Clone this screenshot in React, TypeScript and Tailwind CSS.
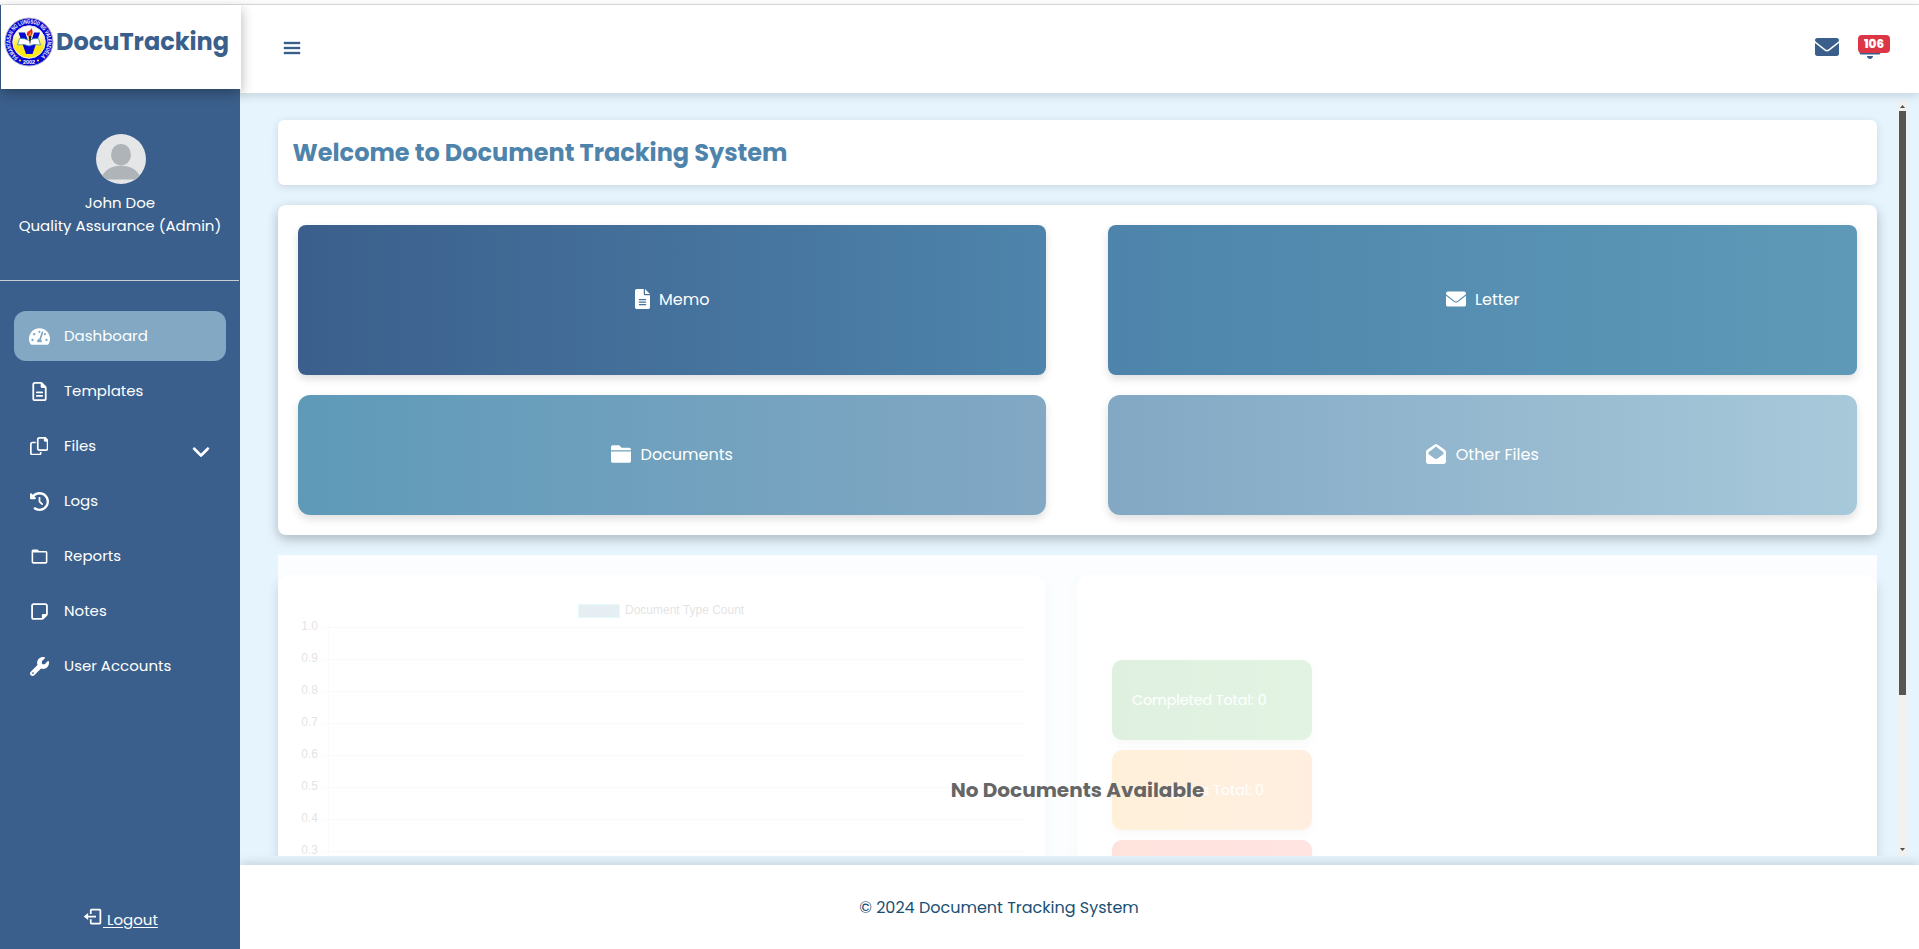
import type { ReactNode } from "react";
import { FaTachometerAlt } from "react-icons/fa";
import {
  FaBell,
  FaChevronDown,
  FaClockRotateLeft,
  FaRegFileLines,
  FaRegNoteSticky,
  FaWrench,
} from "react-icons/fa6";
import { BiFolder, BiLogOut, BiMenu } from "react-icons/bi";

const glyphs = {
  copy: {
    width: 512,
    d: "M502.6 70.63l-61.25-61.25C435.4 3.371 427.2 0 418.7 0H255.1c-35.35 0-64 28.66-64 64l.0195 256C192 355.4 220.7 384 256 384h192c35.2 0 64-28.8 64-64V93.25C512 84.77 508.6 76.63 502.6 70.63zM464 320c0 8.836-7.164 16-16 16H255.1c-8.838 0-16-7.164-16-16L239.1 64.13c0-8.836 7.164-16 16-16h128L384 96c0 17.67 14.33 32 32 32h47.1V320zM272 448c0 8.836-7.164 16-16 16H63.1c-8.838 0-16-7.164-16-16L47.98 192.1c0-8.836 7.164-16 16-16H160V128H63.99c-35.35 0-64 28.65-64 64l.0098 256C.002 483.3 28.66 512 64 512h192c35.2 0 64-28.8 64-64v-32h-47.1L272 448z",
  },
  envelope: {
    width: 512,
    d: "M256 352c-16.53 0-33.06-5.422-47.16-16.41L0 173.2V400C0 426.5 21.49 448 48 448h416c26.51 0 48-21.49 48-48V173.2l-208.8 162.5C289.1 346.6 272.5 352 256 352zM16.29 145.3l212.2 165.1c16.19 12.6 38.87 12.6 55.06 0l212.2-165.1C505.1 137.3 512 125 512 112C512 85.49 490.5 64 464 64h-416C21.49 64 0 85.49 0 112C0 125 6.01 137.3 16.29 145.3z",
  },
  envelopeOpen: {
    width: 512,
    d: "M493.6 163c-24.88-19.62-45.5-35.37-164.3-121.6C312.7 29.21 279.7 0 256.4 0H255.6C232.3 0 199.3 29.21 182.6 41.38C63.88 127.6 43.25 143.4 18.38 163C6.75 172 0 186 0 200.8v247.2C0 483.3 28.65 512 64 512h384c35.35 0 64-28.67 64-64.01V200.8C512 186 505.3 172 493.6 163zM303.2 367.5C289.1 378.5 272.5 384 256 384s-33.06-5.484-47.16-16.47L64 254.9V208.5c21.16-16.59 46.48-35.66 156.4-115.5c3.18-2.328 6.891-5.187 10.98-8.353C236.9 80.44 247.8 71.97 256 66.84c8.207 5.131 19.14 13.6 24.61 17.84c4.09 3.166 7.801 6.027 11.15 8.478C400.9 172.5 426.6 191.7 448 208.5v46.32L303.2 367.5z",
  },
  folder: {
    width: 512,
    d: "M464 96h-192l-64-64H48C21.5 32 0 53.5 0 80V160h512V144C512 117.5 490.5 96 464 96zM0 432C0 458.5 21.5 480 48 480h416c26.5 0 48-21.5 48-48V192H0V432z",
  },
  file: {
    width: 384,
    d: "M256 0v128h128L256 0zM224 128L224 0H48C21.49 0 0 21.49 0 48v416C0 490.5 21.49 512 48 512h288c26.51 0 48-21.49 48-48V160h-127.1C238.3 160 224 145.7 224 128zM272 416h-160C103.2 416 96 408.8 96 400C96 391.2 103.2 384 112 384h160c8.836 0 16 7.162 16 16C288 408.8 280.8 416 272 416zM272 352h-160C103.2 352 96 344.8 96 336C96 327.2 103.2 320 112 320h160c8.836 0 16 7.162 16 16C288 344.8 280.8 352 272 352zM288 272C288 280.8 280.8 288 272 288h-160C103.2 288 96 280.8 96 272C96 263.2 103.2 256 112 256h160C280.8 256 288 263.2 288 272z",
  },
};

type GlyphName = keyof typeof glyphs;

function Glyph({ name, size, className }: { name: GlyphName; size: number; className?: string }) {
  const { width, d } = glyphs[name];
  return (
    <svg viewBox={`0 0 ${width} 512`} width={(size * width) / 512} height={size} fill="currentColor" className={className}>
      <path d={d} />
    </svg>
  );
}

function Seal() {
  return (
    <svg viewBox="0 0 100 100" className="size-[50px] shrink-0">
      <defs>
        <path id="seal-ring" d="M28.8 80.3 A37 37 0 1 1 71.2 80.3" />
        <linearGradient id="seal-field" x1="0" y1="0" x2="0" y2="1">
          <stop offset="0.2" stopColor="#fffdf0" />
          <stop offset="0.65" stopColor="#ffe81a" />
        </linearGradient>
      </defs>
      <circle cx="50" cy="50" r="48" fill="#0808d4" stroke="#b4b4c4" strokeWidth="2" />
      <circle cx="50" cy="50" r="32.500" fill="url(#seal-field)" stroke="#e8e8f4" strokeWidth="2" />
      <text fill="#fff" fontSize="12" fontWeight="800" fontFamily="Liberation Sans, sans-serif">
        <textPath href="#seal-ring" textLength="184" lengthAdjust="spacingAndGlyphs">
          PAMANTASAN NG LUNGSOD NG VALENZUELA
        </textPath>
      </text>
      <text x="50" y="94" fill="#fff" fontSize="11" fontWeight="800" textAnchor="middle" fontFamily="Liberation Sans, sans-serif">
        2002
      </text>
      <circle cx="32" cy="87" r="2.200" fill="#ffe600" />
      <circle cx="68" cy="87" r="2.200" fill="#ffe600" />
      <path d="M29 31 h13 l10 26 l8 -26 h12 l-15 43 h-13 z" fill="#0808d4" />
      <path d="M31 43 q11 -1 19 4 q8 -5 19 -4 l4 13 q-15 -3 -23 2 q-8 -5 -23 -2 z" fill="#fff" stroke="#3b8ea5" strokeWidth="1.600" />
      <path d="M49 38 h6 l-3 18 z" fill="#222" />
      <path d="M46 37 q-2 -6 4 -9 q4 -2 5 -6 q4 8 1 13 l-2 3 z" fill="#e8241c" />
      <path d="M50 36 q1 -4 4 -6 q1 4 -1 6 z" fill="#ff9a2a" />
    </svg>
  );
}

function Avatar() {
  return (
    <svg viewBox="0 0 50 50" className="ml-[2px] size-[50px]">
      <defs>
        <clipPath id="avatar-clip">
          <circle cx="25" cy="25" r="25" />
        </clipPath>
      </defs>
      <g clipPath="url(#avatar-clip)">
        <rect width="50" height="50" fill="#e4e6e8" />
        <ellipse cx="25" cy="20.700" rx="10" ry="10.800" fill="#aeb4b8" />
        <path d="M5 45.500 C7 36 16 31.700 25 31.700 S43 36 45 45.500 Z" fill="#aeb4b8" />
      </g>
    </svg>
  );
}

type NavEntry = { label: string; icon: ReactNode; active?: boolean; expandable?: boolean };

const navEntries: NavEntry[] = [
  { label: "Dashboard", icon: <FaTachometerAlt size={21} />, active: true },
  { label: "Templates", icon: <FaRegFileLines size={19} /> },
  { label: "Files", icon: <Glyph name="copy" size={18.5} />, expandable: true },
  { label: "Logs", icon: <FaClockRotateLeft size={19} /> },
  { label: "Reports", icon: <BiFolder size={19} /> },
  { label: "Notes", icon: <FaRegNoteSticky size={19} /> },
  { label: "User Accounts", icon: <FaWrench size={19} /> },
];

function Sidebar() {
  return (
    <aside className="relative z-10 flex w-60 shrink-0 flex-col bg-[#3b5f8c] text-[15px] text-white">
      <div className="ml-px flex h-[84px] w-60 shrink-0 items-start bg-white pt-3 pl-[3px] shadow-[0_4px_12px_rgba(0,0,0,0.3)]">
        <Seal />
        <span className="ml-[2px] pt-[7px] text-2xl leading-9 font-bold text-[#3b5f8c]">DocuTracking</span>
      </div>
      <div className="mr-px flex h-[192px] flex-col items-center border-b border-[#c9ced4] pt-[45px]">
        <Avatar />
        <p className="mt-2 ml-px leading-[22.5px]">John Doe</p>
        <p className="ml-px leading-[22.5px] whitespace-nowrap">Quality Assurance (Admin)</p>
      </div>
      <nav className="mt-[30px] flex flex-col gap-[5px] px-3.5">
        {navEntries.map(({ label, icon, active, expandable }) => (
          <a
            key={label}
            className={
              active
                ? "flex h-[50px] items-center rounded-xl bg-[#82a8c4] px-3.5"
                : "flex h-[50px] items-center rounded-xl px-3.5"
            }
          >
            <span className="flex w-[22px] justify-center">{icon}</span>
            <span className="ml-3.5">{label}</span>
            {expandable && (
              <FaChevronDown size={18} stroke="currentColor" strokeWidth={22} className="mt-[10px] mr-[2px] ml-auto" />
            )}
          </a>
        ))}
      </nav>
      <a className="mt-auto mb-[17px] ml-[82px] flex items-start">
        <BiLogOut size={21} className="-mt-[2px]" />
        <span className="leading-6 whitespace-pre underline underline-offset-2"> Logout</span>
      </a>
    </aside>
  );
}

function Header() {
  return (
    <header className="relative flex h-[88px] shrink-0 items-start bg-white pl-10 shadow-[0_2px_10px_rgba(0,0,0,0.15)]">
      <BiMenu size={24} className="mt-[31.4px] text-[#3b5f8c]" stroke="currentColor" strokeWidth={0.4} />
      <div className="mr-[29px] ml-auto flex items-start text-[#3b5f8c]">
        <Glyph name="envelope" size={24} className="mt-[30px]" />
        <div className="relative mt-[30px] ml-[19px] w-8">
          <FaBell size={24} className="-ml-[0.5px]" />
          <span className="absolute top-0 left-0 flex h-[18px] w-8 items-center justify-center rounded bg-[#dc3545] text-xs font-extrabold text-white">
            106
          </span>
        </div>
      </div>
    </header>
  );
}

function Tile({ className, icon, children }: { className: string; icon: GlyphName; children: ReactNode }) {
  return (
    <a className={`flex items-center justify-center gap-[9.5px] bg-linear-to-r text-white shadow-[0_4px_8px_rgba(0,0,0,0.13)] ${className}`}>
      <Glyph name={icon} size={20} className="-mt-[2px]" />
      <span>{children}</span>
    </a>
  );
}

const ticks = ["1.0", "0.9", "0.8", "0.7", "0.6", "0.5", "0.4", "0.3"];

function CountChart() {
  return (
    <svg width="767" height="420" className="block" fontFamily="Liberation Sans, Arial, sans-serif" fontSize="12">
      <rect x="301" y="30" width="40" height="12" fill="#5a87b4" fillOpacity="0.9" stroke="#4bc0c0" strokeWidth="1.500" />
      <text x="347" y="38.500" fill="#555">Document Type Count</text>
      {ticks.map((tick, i) => {
        const y = Math.floor(52 + i * 32.07) + 0.5;
        return (
          <g key={tick}>
            <line x1="43" x2="747" y1={y} y2={y} stroke="#000" strokeOpacity="0.12" />
            <text x="40" y={y + 2.5} textAnchor="end" fill="#555">{tick}</text>
          </g>
        );
      })}
      <line x1="50.500" x2="50.500" y1="52" y2="380" stroke="#000" strokeOpacity="0.12" />
    </svg>
  );
}

function StatCard({ className, children }: { className: string; children?: ReactNode }) {
  return (
    <div className={`flex h-20 w-[200px] shrink-0 items-center rounded-[10px] bg-linear-to-r pt-[2px] pl-5 text-[14.2px] text-white shadow-[0_4px_8px_rgba(0,0,0,0.15)] ${className}`}>
      {children}
    </div>
  );
}

function Analytics() {
  return (
    <section className="relative mt-5 h-[470px] shrink-0 pt-5">
      <div className="flex gap-8">
        <div className="h-[440px] w-[767px] shrink-0 rounded-xl bg-white shadow-[0_4px_12px_rgba(0,0,0,0.13)]">
          <CountChart />
        </div>
        <div className="flex h-[440px] grow flex-col gap-2.5 rounded-xl bg-white pt-[85px] pl-[35px] shadow-[0_4px_12px_rgba(0,0,0,0.13)]">
          <StatCard className="from-[#46a84a] to-[#56bb5a]">Completed Total: 0</StatCard>
          <StatCard className="from-[#ffa726] to-[#ff9d45]">In Progress Total: 0</StatCard>
          <StatCard className="from-[#ff5733] to-[#ff5f52]" />
        </div>
      </div>
      <div className="absolute inset-0 flex justify-center bg-white/83 pt-[220px]">
        <p className="text-xl leading-[30px] font-bold text-[#666]">No Documents Available</p>
      </div>
    </section>
  );
}

function Scrollbar() {
  return (
    <div className="flex w-[11px] shrink-0 flex-col items-center bg-[#f1f1f1]">
      <svg width="11" height="11" viewBox="0 0 11 11">
        <path d="M3 8 L5.500 5 L8 8 Z" fill="#505050" />
      </svg>
      <div className="h-[584px] w-[7px] bg-[#555]" />
      <svg width="11" height="11" viewBox="0 0 11 11" className="mt-auto">
        <path d="M3 3 L5.500 6 L8 3 Z" fill="#505050" />
      </svg>
    </div>
  );
}

export default function App() {
  return (
    <div className="flex h-[949px] w-[1919px] flex-col overflow-hidden bg-white font-['Poppins','Inter',sans-serif] text-base">
      <div className="h-[5px] shrink-0 border-b border-[#dee0e2]" />
      <div className="flex min-h-0 grow">
        <Sidebar />
        <div className="flex min-w-0 grow flex-col bg-[#e6f4fd]">
          <Header />
          <div className="mt-[7px] mr-[11px] mb-[9px] flex min-h-0 grow">
            <main className="flex min-w-0 grow flex-col overflow-hidden pt-5 pr-5 pl-[38px]">
              <h1 className="flex h-[65px] shrink-0 items-center rounded-md bg-white pl-[14.5px] text-2xl font-bold text-[#4e84ab] shadow-[0_2px_8px_rgba(0,0,0,0.12)]">
                Welcome to Document Tracking System
              </h1>
              <div className="mt-5 grid shrink-0 grid-cols-[748px_749px] gap-x-[62px] gap-y-5 rounded-lg bg-white p-5 shadow-[0_4px_12px_rgba(0,0,0,0.25)]">
                <Tile icon="file" className="h-[150px] rounded-lg from-[#3b5f8c] to-[#4e84ab]">Memo</Tile>
                <Tile icon="envelope" className="h-[150px] rounded-lg from-[#4e84ab] to-[#5e9ab8]">Letter</Tile>
                <Tile icon="folder" className="h-[120px] rounded-xl from-[#5e9ab8] to-[#82a8c4]">Documents</Tile>
                <Tile icon="envelopeOpen" className="h-[120px] rounded-xl from-[#82a8c4] to-[#a8c9da]">Other Files</Tile>
              </div>
              <Analytics />
            </main>
            <Scrollbar />
          </div>
          <footer className="flex h-[84px] shrink-0 items-center justify-center bg-white pt-[2px] pr-[161px] text-[#1a4f72] shadow-[0_-2px_10px_rgba(0,0,0,0.15)]">
            © 2024 Document Tracking System
          </footer>
        </div>
      </div>
    </div>
  );
}
